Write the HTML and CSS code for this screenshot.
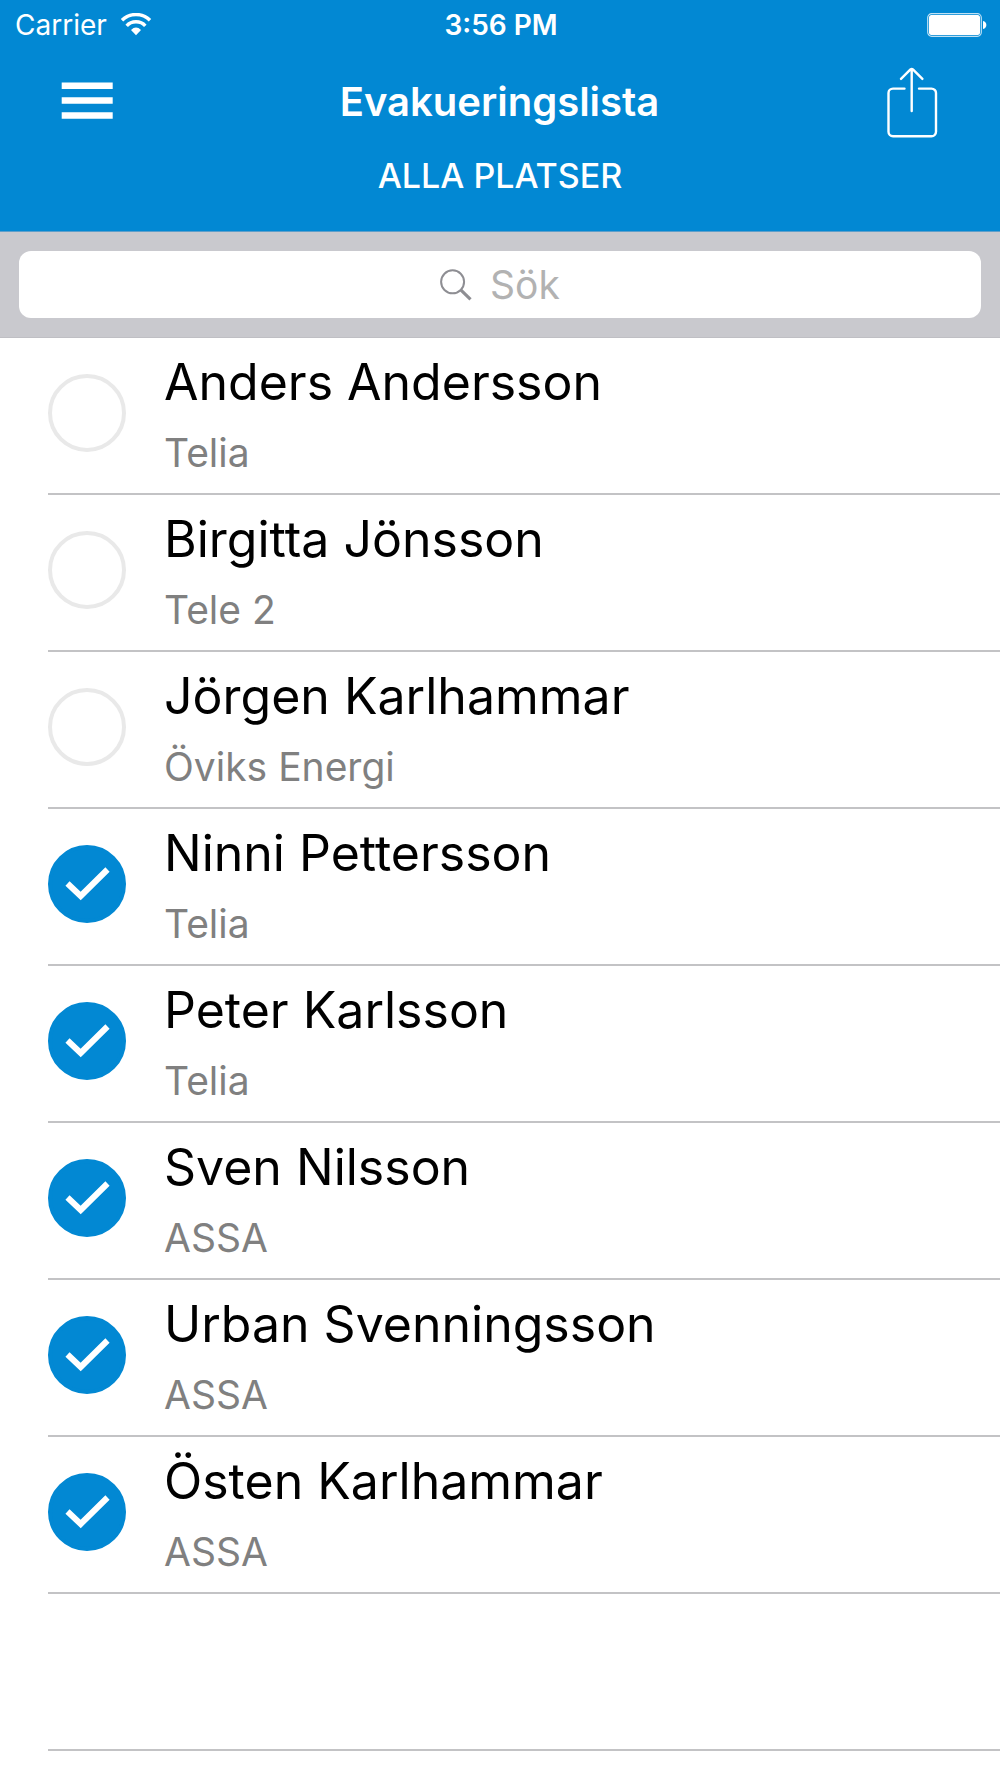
FILE: index.html
```html
<!DOCTYPE html>
<html lang="sv">
<head>
<meta charset="utf-8">
<meta name="viewport" content="width=device-width, initial-scale=1">
<title>Evakueringslista</title>
<link rel="stylesheet" href="styles.css">
</head>
<body>
<header class="header">
  <div class="status">
    <div class="carrier">
      <span>Carrier</span>
      <svg width="32" height="24" viewBox="0 0 32 24" aria-hidden="true">
        <g fill="none" stroke="#fff" stroke-width="3.4"><path d="M2 7.2C9.500 -.4 22.500 -.4 30 7.200"/><path d="M6.700 12.800C11.500 7.400 20.500 7.400 25.300 12.800"/></g>
        <path fill="#fff" d="M11 17Q16 12.200 21 17L16 22.200Z"/>
      </svg>
    </div>
    <time class="clock" datetime="15:56">3:56 PM</time>
    <svg class="battery" width="60" height="24" viewBox="0 0 60 24" aria-hidden="true">
      <rect x=".7" y=".7" width="53.600" height="22.600" rx="4" fill="none" stroke="#fff" stroke-opacity=".75" stroke-width="1.200"/>
      <rect x="2" y="2" width="51" height="20" rx="2.500" fill="#fff"/>
      <path fill="#fff" d="M56 8C60.500 9 60.500 15 56 16Z"/>
    </svg>
  </div>
  <div class="nav">
    <button class="icon-button" type="button" aria-label="Meny">
      <svg width="52" height="42" viewBox="0 0 52 42" aria-hidden="true"><path fill="#fff" d="M.7 1.500h51v6.400h-51zM.7 16.300h51v6.400h-51zM.7 31.300h51v6.400h-51z"/></svg>
    </button>
    <h1 class="title">Evakueringslista</h1>
    <button class="icon-button" type="button" aria-label="Dela">
      <svg width="52" height="72" viewBox="0 0 52 72" fill="none" stroke="#fff" stroke-width="2.400" stroke-linecap="round" stroke-linejoin="round" aria-hidden="true"><path d="M18.500 22.600H7a4.500 4.500 0 0 0-4.500 4.500v38.700a4.500 4.500 0 0 0 4.500 4.500h38.500a4.500 4.500 0 0 0 4.500-4.500V27.100a4.500 4.500 0 0 0-4.500-4.500H33M25.700 45V3M15 12.900L24.500 3.400Q25.700 2.400 26.900 3.400L36.400 12.900"/></svg>
    </button>
  </div>
  <h2 class="subtitle">ALLA PLATSER</h2>
</header>
<search class="search-bar">
  <label class="search-field">
    <svg width="32" height="32" viewBox="0 0 32 32" fill="none" stroke="#8e8e93" aria-hidden="true"><circle cx="12.600" cy="12.800" r="11.500" stroke-width="2"/><path d="M21 21.200L30.500 30.300" stroke-width="3.200"/></svg>
    <input class="search-input" type="text" placeholder="Sök" aria-label="Sök">
  </label>
</search>
<main>
  <ul class="list">
    <li class="row"><label class="person"><span class="check"><input type="checkbox"><svg viewBox="0 0 78 78" aria-hidden="true"><path d="M19.500 38.500L32.700 51L59.500 24.500"/></svg></span><span class="text"><span class="name">Anders Andersson</span><span class="company">Telia</span></span></label></li>
    <li class="row"><label class="person"><span class="check"><input type="checkbox"><svg viewBox="0 0 78 78" aria-hidden="true"><path d="M19.500 38.500L32.700 51L59.500 24.500"/></svg></span><span class="text"><span class="name">Birgitta Jönsson</span><span class="company">Tele 2</span></span></label></li>
    <li class="row"><label class="person"><span class="check"><input type="checkbox"><svg viewBox="0 0 78 78" aria-hidden="true"><path d="M19.500 38.500L32.700 51L59.500 24.500"/></svg></span><span class="text"><span class="name">Jörgen Karlhammar</span><span class="company">Öviks Energi</span></span></label></li>
    <li class="row"><label class="person"><span class="check"><input type="checkbox" checked><svg viewBox="0 0 78 78" aria-hidden="true"><path d="M19.500 38.500L32.700 51L59.500 24.500"/></svg></span><span class="text"><span class="name">Ninni Pettersson</span><span class="company">Telia</span></span></label></li>
    <li class="row"><label class="person"><span class="check"><input type="checkbox" checked><svg viewBox="0 0 78 78" aria-hidden="true"><path d="M19.500 38.500L32.700 51L59.500 24.500"/></svg></span><span class="text"><span class="name">Peter Karlsson</span><span class="company">Telia</span></span></label></li>
    <li class="row"><label class="person"><span class="check"><input type="checkbox" checked><svg viewBox="0 0 78 78" aria-hidden="true"><path d="M19.500 38.500L32.700 51L59.500 24.500"/></svg></span><span class="text"><span class="name">Sven Nilsson</span><span class="company">ASSA</span></span></label></li>
    <li class="row"><label class="person"><span class="check"><input type="checkbox" checked><svg viewBox="0 0 78 78" aria-hidden="true"><path d="M19.500 38.500L32.700 51L59.500 24.500"/></svg></span><span class="text"><span class="name">Urban Svenningsson</span><span class="company">ASSA</span></span></label></li>
    <li class="row"><label class="person"><span class="check"><input type="checkbox" checked><svg viewBox="0 0 78 78" aria-hidden="true"><path d="M19.500 38.500L32.700 51L59.500 24.500"/></svg></span><span class="text"><span class="name">Östen Karlhammar</span><span class="company">ASSA</span></span></label></li>
    <li class="row" aria-hidden="true"></li>
  </ul>
</main>
</body>
</html>
```
FILE: styles.css
```css
* {
  box-sizing: border-box;
}

body {
  margin: 0;
  background: #fff;
  color: #000;
  font-family: Inter, "Liberation Sans", sans-serif;
}

.header {
  background: #0288d3;
  color: #fff;
  padding-bottom: 32px;
  border-bottom: 1px solid #5f9fca;
}

.status {
  display: grid;
  grid-template-columns: 1fr auto 1fr;
  align-items: center;
  height: 50px;
  padding: 0 13px 0 15px;
  font-size: 28px;
  line-height: 50px;
}

.carrier {
  display: flex;
  align-items: center;
  gap: 13px;
}

.clock {
  font-weight: 600;
}

.battery {
  justify-self: end;
}

.nav {
  display: grid;
  grid-template-columns: 52px 1fr 52px;
  align-items: center;
  height: 103px;
  padding: 0 62px 0 61px;
}

.icon-button {
  display: flex;
  padding: 0;
  border: 0;
  background: none;
  cursor: pointer;
}

.title {
  margin: 0;
  font-size: 40px;
  font-weight: 600;
  line-height: 48px;
  text-align: center;
}

.subtitle {
  margin: 0;
  font-size: 34px;
  font-weight: 500;
  line-height: 46px;
  text-align: center;
}

.search-bar {
  display: block;
  padding: 19px;
  background: #c9c9ce;
  border-bottom: 1px solid #bfbfc4;
}

.search-field {
  display: flex;
  align-items: center;
  justify-content: center;
  gap: 18px;
  height: 67px;
  border-radius: 12px;
  background: #fff;
  cursor: text;
}

.search-input {
  field-sizing: content;
  padding: 0;
  border: 0;
  outline: 0;
  background: none;
  color: #000;
  font: inherit;
  font-size: 39px;
  line-height: 48px;
}

.search-input::placeholder {
  color: #b2b2b2;
  opacity: 1;
}

.list {
  margin: 0;
  padding: 0 0 0 48px;
  list-style: none;
}

.row {
  height: 157px;
  border-bottom: 2px solid #c3c3c5;
}

.person {
  display: flex;
  gap: 38px;
}

.check {
  display: grid;
  flex: none;
  width: 78px;
  height: 78px;
  margin-top: 36px;
}

.check input,
.check svg {
  grid-area: 1 / 1;
  width: 78px;
  height: 78px;
  margin: 0;
}

.check input {
  appearance: none;
  border: 4px solid #e9e9e9;
  border-radius: 50%;
}

.check input:checked {
  border-color: #0288d3;
  background: #0288d3;
}

.check svg {
  visibility: hidden;
  fill: none;
  stroke: #fff;
  stroke-width: 6;
  pointer-events: none;
}

.check input:checked + svg {
  visibility: visible;
}

.text {
  display: flex;
  flex-direction: column;
  gap: 17px;
  padding-top: 14px;
}

.name {
  font-size: 50px;
  line-height: 60px;
}

.company {
  color: #808080;
  font-size: 39px;
  line-height: 48px;
}
```
